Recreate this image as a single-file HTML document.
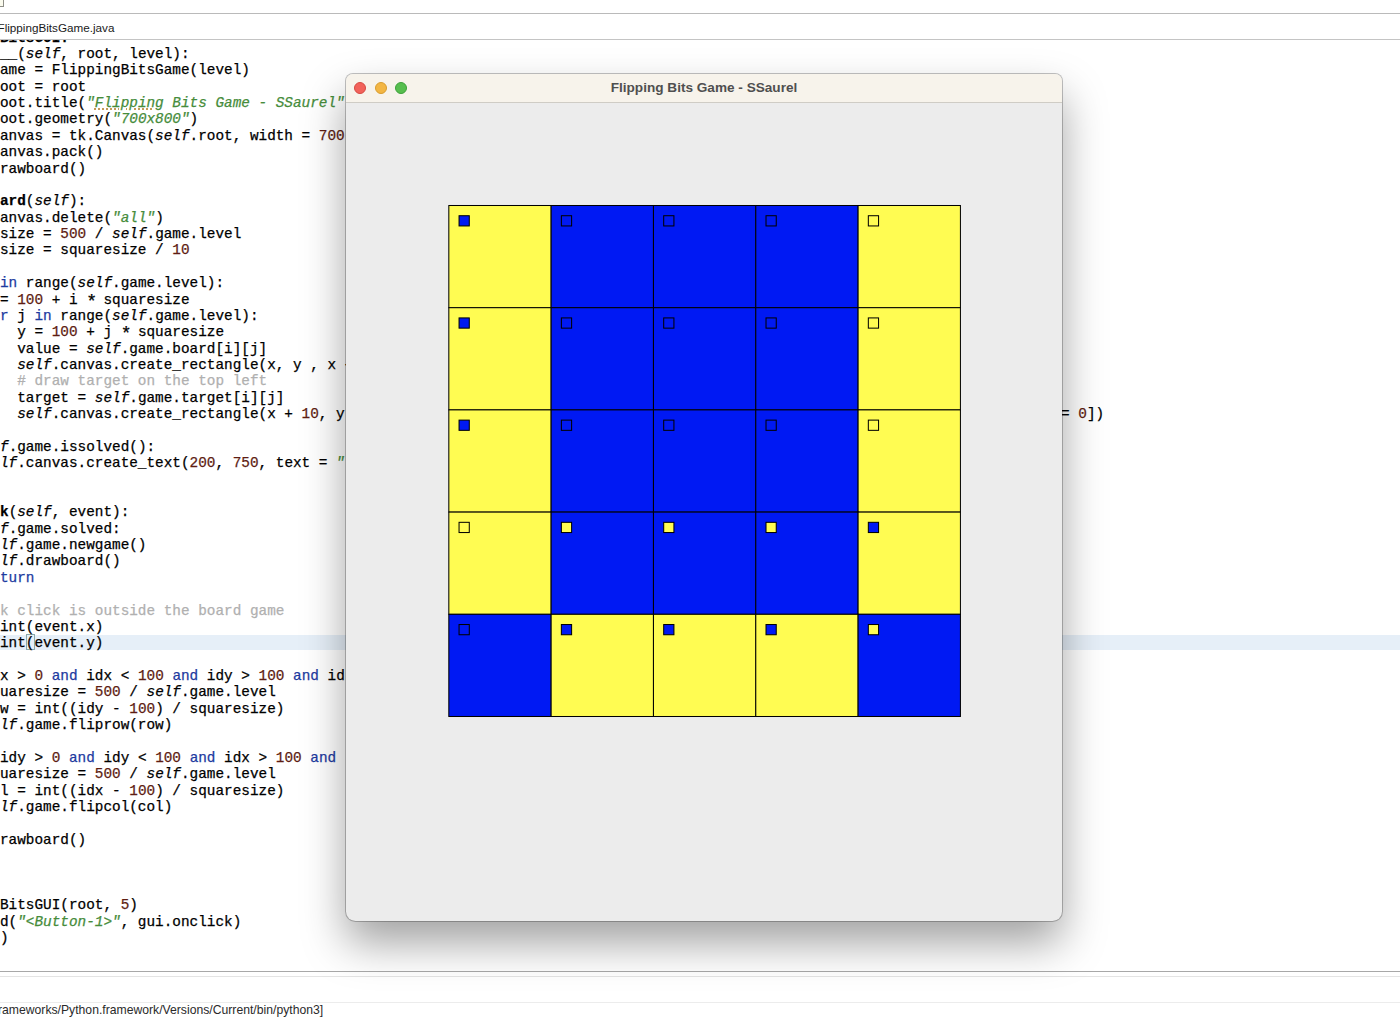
<!DOCTYPE html>
<html><head><meta charset="utf-8">
<style>
html,body{margin:0;padding:0;}
body{width:1400px;height:1017px;position:relative;overflow:hidden;background:#fff;font-family:"Liberation Sans",sans-serif;}
.abs{position:absolute;}
#topbar{position:absolute;left:0;top:0;width:1400px;height:13px;background:#fff;}
#hl1{position:absolute;left:0;top:13px;width:1400px;height:1px;background:#bababa;}
#tabbar{position:absolute;left:0;top:14px;width:1400px;height:25px;background:#fff;}
#tabtxt{position:absolute;left:-2.5px;top:6.5px;font-size:11.7px;color:#1a1a1a;white-space:pre;}
#hl2{position:absolute;left:0;top:39px;width:1400px;height:1px;background:#c4c4c4;}
#code{position:absolute;left:0;top:40px;width:1400px;height:931px;overflow:hidden;background:#fff;}
.curline{position:absolute;left:0;width:1400px;background:#e6eff8;}
.ln{position:absolute;left:0;white-space:pre;font-family:"Liberation Mono",monospace;font-size:14.367px;line-height:16.37px;color:#000;-webkit-text-stroke:0.25px currentColor;}
.b{font-weight:bold;}
.i{font-style:italic;}
.k{color:#1d3a9f;}
.n{color:#5e1d12;}
.s{color:#468c3b;font-style:italic;}
.sw{color:#468c3b;font-style:italic;text-decoration:underline dotted #c49a58;text-decoration-thickness:1.5px;text-underline-offset:0.5px;}
.c{color:#b0b0b0;}
.ast{display:inline-block;width:8.62px;text-align:center;font-size:18px;line-height:0;vertical-align:baseline;position:relative;top:3px;}
.br{outline:1px solid #7aa0a0;outline-offset:-1px;}
#hl3{position:absolute;left:0;top:971px;width:1400px;height:1px;background:#a8a8a8;}
#hl4{position:absolute;left:0;top:976px;width:1400px;height:1px;background:#e4e4e4;}
#bottom{position:absolute;left:0;top:972px;width:1400px;height:45px;background:#fff;}
#hl5{position:absolute;left:0;top:1002px;width:1400px;height:1px;background:#ececec;}
#status{position:absolute;left:-2px;top:1003px;font-size:12.2px;color:#2a2a2a;white-space:pre;}
#win{position:absolute;left:346.0px;top:73.7px;width:716.0px;height:846.9px;border-radius:7px 7px 9.5px 9.5px;background:#ececec;box-shadow:0 0 0 1px rgba(0,0,0,0.24),0 22px 44px rgba(0,0,0,0.37);overflow:hidden;}
#title{position:absolute;left:0;top:0;width:100%;height:28.2px;background:#f7f3eb;border-bottom:1px solid #cfccc5;}
#ttxt{position:absolute;left:0;width:100%;top:6px;text-align:center;font-weight:bold;font-size:13.6px;color:#4f4f4f;padding-left:0px;}
.tl{position:absolute;top:8.30px;width:12px;height:12px;border-radius:50%;box-sizing:border-box;}
.board{position:absolute;}
#canvas{position:absolute;left:0.5px;top:29.599999999999994px;width:716.2400000000001px;height:817.6px;}
</style></head><body>
<div id="topbar"><div class="abs" style="left:0;top:0;width:3px;height:6px;background:#fbfbee;border:1px solid #8e8e86;border-left:none;border-top:none;"></div></div>
<div id="hl1"></div>
<div id="tabbar"><div id="tabtxt">FlippingBitsGame.java</div></div>
<div id="hl2"></div>
<div id="code">
<div class="curline" style="top:594.5px;height:15.8px"></div><div style="position:absolute;left:25.9px;top:594.4px;width:8.8px;height:15.6px;box-sizing:border-box;border:1px solid #8aa9ab;"></div>
<div class="ln" style="top:-10.39px"><span class="b">BitsGUI:</span></div>
<div class="ln" style="top:5.98px"><span class="b">__</span>(<span class="i">self</span>, root, level):</div>
<div class="ln" style="top:22.35px">ame = FlippingBitsGame(level)</div>
<div class="ln" style="top:38.72px">oot = root</div>
<div class="ln" style="top:55.09px">oot.title(<span class="s">&quot;</span><span class="sw">Flipping</span><span class="s"> Bits Game - SSaurel&quot;</span></div>
<div class="ln" style="top:71.46px">oot.geometry(<span class="s">&quot;700x800&quot;</span>)</div>
<div class="ln" style="top:87.83px">anvas = tk.Canvas(<span class="i">self</span>.root, width = <span class="n">700</span></div>
<div class="ln" style="top:104.20px">anvas.pack()</div>
<div class="ln" style="top:120.57px">rawboard()</div>
<div class="ln" style="top:136.94px"></div>
<div class="ln" style="top:153.31px"><span class="b">ard</span>(<span class="i">self</span>):</div>
<div class="ln" style="top:169.68px">anvas.delete(<span class="s">&quot;all&quot;</span>)</div>
<div class="ln" style="top:186.05px">size = <span class="n">500</span> / <span class="i">self</span>.game.level</div>
<div class="ln" style="top:202.42px">size = squaresize / <span class="n">10</span></div>
<div class="ln" style="top:218.79px"></div>
<div class="ln" style="top:235.16px"><span class="k">in</span> range(<span class="i">self</span>.game.level):</div>
<div class="ln" style="top:251.53px">= <span class="n">100</span> + i <span class="ast">*</span> squaresize</div>
<div class="ln" style="top:267.90px"><span class="k">r</span> j <span class="k">in</span> range(<span class="i">self</span>.game.level):</div>
<div class="ln" style="top:284.27px">  y = <span class="n">100</span> + j <span class="ast">*</span> squaresize</div>
<div class="ln" style="top:300.64px">  value = <span class="i">self</span>.game.board[i][j]</div>
<div class="ln" style="top:317.01px">  <span class="i">self</span>.canvas.create_rectangle(x, y , x + squaresize</div>
<div class="ln" style="top:333.38px"><span class="c">  # draw target on the top left</span></div>
<div class="ln" style="top:349.75px">  target = <span class="i">self</span>.game.target[i][j]</div>
<div class="ln" style="top:366.12px">  <span class="i">self</span>.canvas.create_rectangle(x + <span class="n">10</span>, y</div>
<div class="ln" style="top:382.49px"></div>
<div class="ln" style="top:398.86px"><span class="i">f</span>.game.issolved():</div>
<div class="ln" style="top:415.23px"><span class="i">lf</span>.canvas.create_text(<span class="n">200</span>, <span class="n">750</span>, text = <span class="s">&quot;</span></div>
<div class="ln" style="top:431.60px"></div>
<div class="ln" style="top:447.97px"></div>
<div class="ln" style="top:464.34px"><span class="b">k</span>(<span class="i">self</span>, event):</div>
<div class="ln" style="top:480.71px"><span class="i">f</span>.game.solved:</div>
<div class="ln" style="top:497.08px"><span class="i">lf</span>.game.newgame()</div>
<div class="ln" style="top:513.45px"><span class="i">lf</span>.drawboard()</div>
<div class="ln" style="top:529.82px"><span class="k">turn</span></div>
<div class="ln" style="top:546.19px"></div>
<div class="ln" style="top:562.56px"><span class="c">k click is outside the board game</span></div>
<div class="ln" style="top:578.93px">int(event.x)</div>
<div class="ln" style="top:595.30px">int(event.y)</div>
<div class="ln" style="top:611.67px"></div>
<div class="ln" style="top:628.04px">x &gt; <span class="n">0</span> <span class="k">and</span> idx &lt; <span class="n">100</span> <span class="k">and</span> idy &gt; <span class="n">100</span> <span class="k">and</span> id</div>
<div class="ln" style="top:644.41px">uaresize = <span class="n">500</span> / <span class="i">self</span>.game.level</div>
<div class="ln" style="top:660.78px">w = int((idy - <span class="n">100</span>) / squaresize)</div>
<div class="ln" style="top:677.15px"><span class="i">lf</span>.game.fliprow(row)</div>
<div class="ln" style="top:693.52px"></div>
<div class="ln" style="top:709.89px">idy &gt; <span class="n">0</span> <span class="k">and</span> idy &lt; <span class="n">100</span> <span class="k">and</span> idx &gt; <span class="n">100</span> <span class="k">and</span></div>
<div class="ln" style="top:726.26px">uaresize = <span class="n">500</span> / <span class="i">self</span>.game.level</div>
<div class="ln" style="top:742.63px">l = int((idx - <span class="n">100</span>) / squaresize)</div>
<div class="ln" style="top:759.00px"><span class="i">lf</span>.game.flipcol(col)</div>
<div class="ln" style="top:775.37px"></div>
<div class="ln" style="top:791.74px">rawboard()</div>
<div class="ln" style="top:808.11px"></div>
<div class="ln" style="top:824.48px"></div>
<div class="ln" style="top:840.85px"></div>
<div class="ln" style="top:857.22px">BitsGUI(root, <span class="n">5</span>)</div>
<div class="ln" style="top:873.59px">d(<span class="s">&quot;&lt;Button-1&gt;&quot;</span>, gui.onclick)</div>
<div class="ln" style="top:889.96px">)</div>
<div class="ln" style="top:366.12px;left:1061.10px">= <span class="n">0</span>])</div>
</div>
<div id="bottom"></div>
<div id="hl3"></div>
<div id="hl4"></div>
<div id="hl5"></div>
<div id="status">rameworks/Python.framework/Versions/Current/bin/python3]</div>
<div id="win">
 <div id="title">
  <div class="tl" style="left:8.00px;background:#f2625a;border:0.5px solid #d64a42;"></div>
  <div class="tl" style="left:28.50px;background:#f3b643;border:0.5px solid #d99d2e;"></div>
  <div class="tl" style="left:49.00px;background:#57be4e;border:0.5px solid #3da13a;"></div>
  <div id="ttxt">Flipping Bits Game - SSaurel</div>
 </div>
</div>
<svg class="board" width="1400" height="1017" viewBox="0 0 1400 1017" style="left:0;top:0"><g transform="translate(346.5 103.3) scale(1.0232 1.022)"><rect x="100" y="100" width="100" height="100" fill="#fffc52" stroke="#000" stroke-width="1"/><rect x="200" y="100" width="100" height="100" fill="#0019f3" stroke="#000" stroke-width="1"/><rect x="300" y="100" width="100" height="100" fill="#0019f3" stroke="#000" stroke-width="1"/><rect x="400" y="100" width="100" height="100" fill="#0019f3" stroke="#000" stroke-width="1"/><rect x="500" y="100" width="100" height="100" fill="#fffc52" stroke="#000" stroke-width="1"/><rect x="100" y="200" width="100" height="100" fill="#fffc52" stroke="#000" stroke-width="1"/><rect x="200" y="200" width="100" height="100" fill="#0019f3" stroke="#000" stroke-width="1"/><rect x="300" y="200" width="100" height="100" fill="#0019f3" stroke="#000" stroke-width="1"/><rect x="400" y="200" width="100" height="100" fill="#0019f3" stroke="#000" stroke-width="1"/><rect x="500" y="200" width="100" height="100" fill="#fffc52" stroke="#000" stroke-width="1"/><rect x="100" y="300" width="100" height="100" fill="#fffc52" stroke="#000" stroke-width="1"/><rect x="200" y="300" width="100" height="100" fill="#0019f3" stroke="#000" stroke-width="1"/><rect x="300" y="300" width="100" height="100" fill="#0019f3" stroke="#000" stroke-width="1"/><rect x="400" y="300" width="100" height="100" fill="#0019f3" stroke="#000" stroke-width="1"/><rect x="500" y="300" width="100" height="100" fill="#fffc52" stroke="#000" stroke-width="1"/><rect x="100" y="400" width="100" height="100" fill="#fffc52" stroke="#000" stroke-width="1"/><rect x="200" y="400" width="100" height="100" fill="#0019f3" stroke="#000" stroke-width="1"/><rect x="300" y="400" width="100" height="100" fill="#0019f3" stroke="#000" stroke-width="1"/><rect x="400" y="400" width="100" height="100" fill="#0019f3" stroke="#000" stroke-width="1"/><rect x="500" y="400" width="100" height="100" fill="#fffc52" stroke="#000" stroke-width="1"/><rect x="100" y="500" width="100" height="100" fill="#0019f3" stroke="#000" stroke-width="1"/><rect x="200" y="500" width="100" height="100" fill="#fffc52" stroke="#000" stroke-width="1"/><rect x="300" y="500" width="100" height="100" fill="#fffc52" stroke="#000" stroke-width="1"/><rect x="400" y="500" width="100" height="100" fill="#fffc52" stroke="#000" stroke-width="1"/><rect x="500" y="500" width="100" height="100" fill="#0019f3" stroke="#000" stroke-width="1"/><rect x="110" y="110" width="10" height="10" fill="#0019f3" stroke="#000" stroke-width="1"/><rect x="210" y="110" width="10" height="10" fill="#0019f3" stroke="#000" stroke-width="1"/><rect x="310" y="110" width="10" height="10" fill="#0019f3" stroke="#000" stroke-width="1"/><rect x="410" y="110" width="10" height="10" fill="#0019f3" stroke="#000" stroke-width="1"/><rect x="510" y="110" width="10" height="10" fill="#fffc52" stroke="#000" stroke-width="1"/><rect x="110" y="210" width="10" height="10" fill="#0019f3" stroke="#000" stroke-width="1"/><rect x="210" y="210" width="10" height="10" fill="#0019f3" stroke="#000" stroke-width="1"/><rect x="310" y="210" width="10" height="10" fill="#0019f3" stroke="#000" stroke-width="1"/><rect x="410" y="210" width="10" height="10" fill="#0019f3" stroke="#000" stroke-width="1"/><rect x="510" y="210" width="10" height="10" fill="#fffc52" stroke="#000" stroke-width="1"/><rect x="110" y="310" width="10" height="10" fill="#0019f3" stroke="#000" stroke-width="1"/><rect x="210" y="310" width="10" height="10" fill="#0019f3" stroke="#000" stroke-width="1"/><rect x="310" y="310" width="10" height="10" fill="#0019f3" stroke="#000" stroke-width="1"/><rect x="410" y="310" width="10" height="10" fill="#0019f3" stroke="#000" stroke-width="1"/><rect x="510" y="310" width="10" height="10" fill="#fffc52" stroke="#000" stroke-width="1"/><rect x="110" y="410" width="10" height="10" fill="#fffc52" stroke="#000" stroke-width="1"/><rect x="210" y="410" width="10" height="10" fill="#fffc52" stroke="#000" stroke-width="1"/><rect x="310" y="410" width="10" height="10" fill="#fffc52" stroke="#000" stroke-width="1"/><rect x="410" y="410" width="10" height="10" fill="#fffc52" stroke="#000" stroke-width="1"/><rect x="510" y="410" width="10" height="10" fill="#0019f3" stroke="#000" stroke-width="1"/><rect x="110" y="510" width="10" height="10" fill="#0019f3" stroke="#000" stroke-width="1"/><rect x="210" y="510" width="10" height="10" fill="#0019f3" stroke="#000" stroke-width="1"/><rect x="310" y="510" width="10" height="10" fill="#0019f3" stroke="#000" stroke-width="1"/><rect x="410" y="510" width="10" height="10" fill="#0019f3" stroke="#000" stroke-width="1"/><rect x="510" y="510" width="10" height="10" fill="#fffc52" stroke="#000" stroke-width="1"/></g></svg>
</body></html>
